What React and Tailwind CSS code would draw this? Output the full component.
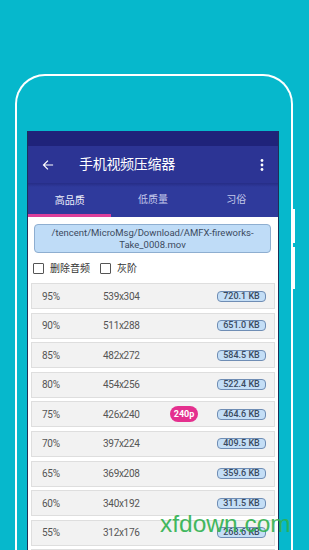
import React from 'react';

const rows = [
  { q: '95%', res: '539x304', size: '720.1 KB' },
  { q: '90%', res: '511x288', size: '651.0 KB' },
  { q: '85%', res: '482x272', size: '584.5 KB' },
  { q: '80%', res: '454x256', size: '522.4 KB' },
  { q: '75%', res: '426x240', size: '464.6 KB', tag: '240p' },
  { q: '70%', res: '397x224', size: '409.5 KB' },
  { q: '65%', res: '369x208', size: '359.6 KB' },
  { q: '60%', res: '340x192', size: '311.5 KB' },
  { q: '55%', res: '312x176', size: '268.6 KB' },
  { q: '50%', res: '283x160', size: '231.0 KB' },
];

const cjk = { fontFamily: 'Roboto, "Noto Sans CJK SC", sans-serif' };

function Checkbox({ label }) {
  return (
    <div className="flex items-center gap-[6px]">
      <div className="w-[11px] h-[11px] border-[1.5px] border-[#555] rounded-[1px] bg-white" />
      <span className="text-[10px] text-[#333]">{label}</span>
    </div>
  );
}

function Row({ q, res, size, tag }) {
  return (
    <div className="h-[26px] shrink-0 mx-[3px] bg-[#f2f2f2] border border-[#dedede] flex items-center pl-[10px] pr-[8px] text-[10px] tracking-[-0.3px] text-[#555]">
      <span className="w-[61px]">{q}</span>
      <span className="w-[67px]">{res}</span>
      <div className="w-[28px]">
        {tag && (
          <span className="h-[16px] w-[28px] rounded-full bg-[#e4308e] text-white font-bold text-[9px] tracking-normal flex items-center justify-center">
            {tag}
          </span>
        )}
      </div>
      <span className="ml-auto h-[11px] w-[49px] rounded-[4px] bg-[#c4def6] border border-[#6f8db4] text-[#3a4a5f] font-medium text-[9px] tracking-normal flex items-center justify-center leading-none">
        {size}
      </span>
    </div>
  );
}

export default function App() {
  return (
    <div className="relative w-[309px] h-[550px] overflow-hidden bg-[#06b8cc] pt-[74px] pl-[15px]" style={cjk}>
      {/* side buttons */}
      <div className="absolute left-[293px] top-[209px] w-[2px] h-[34px] bg-white" />
      <div className="absolute left-[293px] top-[247px] w-[2px] h-[42px] bg-white" />

      <div className="w-[278px] h-[500px] border-2 border-b-0 border-white rounded-t-[30px] pt-[55px] pl-[10px]">
        <div className="w-[252px] h-[430px] bg-white border-x border-[#1d3057] flex flex-col overflow-hidden">
          <div className="h-[15px] shrink-0 bg-[#1f237a]" />
          <div className="h-[37px] shrink-0 bg-[#2c3494] flex items-center pl-[14px] pr-[14px] text-white">
            <svg width="12" height="12" viewBox="0 0 24 24" fill="none" stroke="white" strokeWidth="2.4" strokeLinecap="square">
              <path d="M21 12H4M11 4l-8 8 8 8" />
            </svg>
            <span className="ml-[25px] text-[14px] tracking-[-0.3px]">手机视频压缩器</span>
            <svg className="ml-auto" width="4" height="12" viewBox="0 0 4 12" fill="white">
              <circle cx="2" cy="1.5" r="1.4" />
              <circle cx="2" cy="6" r="1.4" />
              <circle cx="2" cy="10.5" r="1.4" />
            </svg>
          </div>
          <div className="h-[34px] shrink-0 bg-[#2f3a9c] relative grid grid-cols-3">
            <div className="absolute inset-x-0 top-0 h-[4px] bg-gradient-to-b from-[#262d86] to-[#2f3a9c]" />
            <div className="relative flex flex-col">
              <span className="flex-1 flex items-center justify-center pt-[4px] text-[10px] text-[#eef0fb]">高品质</span>
              <div className="h-[3px] bg-[#dc3f9b]" />
            </div>
            <span className="relative flex items-center justify-center pb-[1px] text-[10px] text-[#c3c8ea]">低质量</span>
            <span className="relative flex items-center justify-center pb-[1px] text-[10px] text-[#c3c8ea]">习俗</span>
          </div>

          <div className="mt-[7px] ml-[6px] mr-[7px] h-[29px] shrink-0 rounded-[4px] bg-[#bfdcf7] border border-[#8eaed0] flex flex-col items-center justify-center text-[9.5px] leading-[12px] text-[#3c4a5e]">
            <span>/tencent/MicroMsg/Download/AMFX-fireworks-</span>
            <span>Take_0008.mov</span>
          </div>

          <div className="h-[30px] shrink-0 flex items-center gap-[10px] pl-[5px]">
            <Checkbox label="删除音频" />
            <Checkbox label="灰阶" />
          </div>

          <div className="flex flex-col gap-[3.6px]">
            {rows.map((r) => (
              <Row key={r.q} {...r} />
            ))}
          </div>
        </div>
      </div>

      <span
        className="absolute left-[160px] top-[512px] text-[24.5px] text-[#2fb14f] opacity-90 leading-none"
        style={{ fontFamily: '"Liberation Sans", Arial, sans-serif' }}
      >
        xfdown.com
      </span>
    </div>
  );
}
